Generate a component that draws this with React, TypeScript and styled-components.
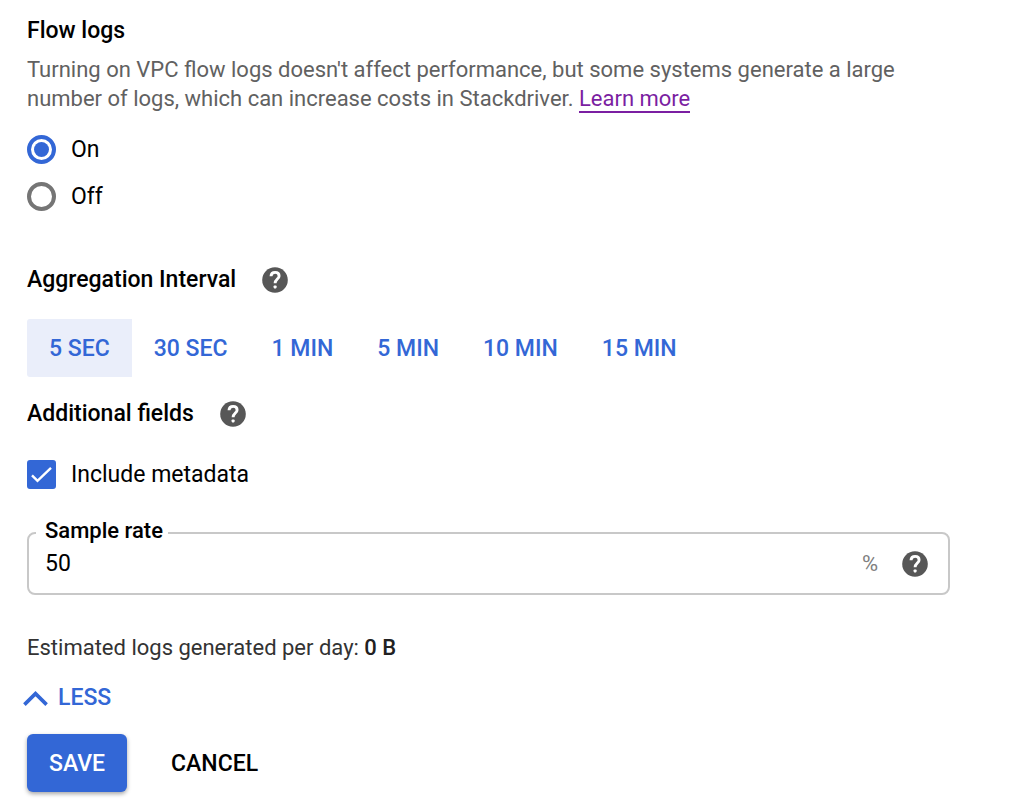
import React, { useState } from 'react';
import styled, { createGlobalStyle, css } from 'styled-components';

const BLUE = '#3367d6';

const GlobalStyle = createGlobalStyle`
  *, *::before, *::after { box-sizing: border-box; }
  body {
    margin: 0;
    background: #fff;
    color: #000;
    font-family: Roboto, "Liberation Sans", sans-serif;
    font-size: 23px;
    line-height: 29px;
  }
  button, input { font: inherit; color: inherit; }
`;

const Form = styled.form`
  display: flex;
  flex-direction: column;
  padding: 16px 74px 18px 27px;
`;

const Heading = styled.h2`
  margin: 0;
  font-size: 23px;
  font-weight: 500;
`;

const HeadingRow = styled.div`
  display: flex;
  align-items: center;
  gap: 26px;
`;

const Description = styled.p`
  margin: 10px 0 22px;
  max-width: 880px;
  font-size: 22px;
  color: #616161;
`;

const Link = styled.a`
  color: #7b1fa2;
  text-decoration: none;
  border-bottom: 2px solid currentColor;
`;

const Options = styled.div`
  display: flex;
  flex-direction: column;
  align-items: flex-start;
  gap: 18px;
  margin-bottom: 54px;
`;

const Choice = styled.label`
  display: flex;
  align-items: center;
  gap: 15px;
`;

const Radio = styled.input.attrs({ type: 'radio' })`
  appearance: none;
  flex: none;
  width: 29px;
  height: 29px;
  margin: 0;
  border: 4px solid #757575;
  border-radius: 50%;

  &:checked {
    border-color: ${BLUE};
    background: ${BLUE};
    background-clip: content-box;
    padding: 3px;
  }
`;

const CheckWrap = styled.span`
  display: grid;
  width: 29px;
  height: 29px;

  > * { grid-area: 1 / 1; }
  > svg { pointer-events: none; }
`;

const Checkbox = styled.input.attrs({ type: 'checkbox' })`
  appearance: none;
  width: 29px;
  height: 29px;
  margin: 0;
  border: 3px solid #757575;
  border-radius: 3px;

  &:checked {
    border-color: ${BLUE};
    background: ${BLUE};
  }
`;

const Help = styled.button`
  display: flex;
  flex: none;
  padding: 0;
  border: 0;
  background: none;
  color: #575757;
`;

const Intervals = styled.div`
  display: flex;
  flex-wrap: wrap;
  margin: 25px 0 22px;
`;

const buttonBase = css`
  height: 58px;
  padding: 0 22px;
  border: 0;
  font-weight: 500;
  white-space: nowrap;
  cursor: pointer;
`;

const Interval = styled.button<{ $active: boolean }>`
  ${buttonBase}
  color: ${BLUE};
  background: ${(p) => (p.$active ? '#eaeefa' : 'transparent')};
  border-radius: 3px 0 0 3px;
`;

const Metadata = styled.div`
  display: flex;
  margin: 32px 0 43px;
`;

const Field = styled.div`
  position: relative;
  display: flex;
  align-items: center;
  height: 63px;
  padding: 0 20px 0 16px;
  border: 2px solid #c8c8c8;
  border-radius: 8px;
`;

const FieldLabel = styled.label`
  position: absolute;
  top: -18px;
  left: 7px;
  padding: 0 5px 0 9px;
  background: #fff;
  font-size: 22px;
  font-weight: 500;
`;

const FieldInput = styled.input`
  flex: 1;
  min-width: 0;
  padding: 0;
  border: 0;
  outline: 0;
  background: none;
`;

const Unit = styled.span`
  margin-right: 24px;
  font-size: 22px;
  color: #808080;
`;

const Estimate = styled.p`
  margin: 38px 0 21px;
  font-size: 22px;
  color: #333;

  strong { font-weight: 500; color: #212121; }
`;

const Toggle = styled.button`
  display: flex;
  align-items: center;
  align-self: flex-start;
  gap: 10px;
  margin-left: -4px;
  padding: 0;
  border: 0;
  background: none;
  color: ${BLUE};
  font-weight: 500;
  cursor: pointer;
`;

const Actions = styled.div`
  display: flex;
  gap: 22px;
  margin-top: 22px;
`;

const Save = styled.button`
  ${buttonBase}
  border-radius: 6px;
  background: ${BLUE};
  color: #fff;
  box-shadow: 0 2px 4px rgba(0, 0, 0, 0.35);
`;

const Cancel = styled.button`
  ${buttonBase}
  background: none;
`;

const HelpButton = ({ topic }: { topic: string }) => (
  <Help type="button" aria-label={`Help for ${topic}`}>
    <svg width="26" height="26" viewBox="0 0 26 26" aria-hidden="true">
      <circle cx="13" cy="13" r="12.8" fill="currentColor" />
      <path
        d="M9 9.3C9.1 6.8 10.7 5.4 13.1 5.4c2.4 0 4 1.4 4 3.5 0 3.1-4 3.3-4 7.4"
        fill="none"
        stroke="#fff"
        strokeWidth="2.9"
      />
      <rect x="11.6" y="18.4" width="3" height="3" rx="0.8" fill="#fff" />
    </svg>
  </Help>
);

const INTERVALS = ['5 SEC', '30 SEC', '1 MIN', '5 MIN', '10 MIN', '15 MIN'];

export default function App() {
  const [flowLogs, setFlowLogs] = useState('On');
  const [interval, setInterval] = useState('5 SEC');

  return (
    <>
      <GlobalStyle />
      <Form onSubmit={(e) => e.preventDefault()}>
        <Heading id="flow-logs">Flow logs</Heading>
        <Description>
          Turning on VPC flow logs doesn't affect performance, but some systems generate a large
          number of logs, which can increase costs in Stackdriver. <Link href="#">Learn more</Link>
        </Description>
        <Options role="radiogroup" aria-labelledby="flow-logs">
          {['On', 'Off'].map((value) => (
            <Choice key={value}>
              <Radio
                name="flow-logs"
                value={value}
                checked={flowLogs === value}
                onChange={() => setFlowLogs(value)}
              />
              {value}
            </Choice>
          ))}
        </Options>

        <HeadingRow>
          <Heading>Aggregation Interval</Heading>
          <HelpButton topic="aggregation interval" />
        </HeadingRow>
        <Intervals>
          {INTERVALS.map((value) => (
            <Interval
              key={value}
              type="button"
              $active={interval === value}
              aria-pressed={interval === value}
              onClick={() => setInterval(value)}
            >
              {value}
            </Interval>
          ))}
        </Intervals>

        <HeadingRow>
          <Heading>Additional fields</Heading>
          <HelpButton topic="additional fields" />
        </HeadingRow>
        <Metadata>
          <Choice>
            <CheckWrap>
              <Checkbox defaultChecked />
              <svg width="29" height="29" viewBox="0 0 29 29" fill="none" stroke="#fff" strokeWidth="2.4" aria-hidden="true">
                <path d="M5 15.3l5.5 5.5L24 7.9" />
              </svg>
            </CheckWrap>
            Include metadata
          </Choice>
        </Metadata>

        <Field>
          <FieldLabel htmlFor="sample-rate">Sample rate</FieldLabel>
          <FieldInput id="sample-rate" type="text" inputMode="numeric" defaultValue="50" />
          <Unit>%</Unit>
          <HelpButton topic="sample rate" />
        </Field>

        <Estimate>
          Estimated logs generated per day: <strong>0 B</strong>
        </Estimate>
        <Toggle type="button" aria-expanded="true">
          <svg width="25" height="16" viewBox="0 0 25 16" fill="none" stroke="currentColor" strokeWidth="3.6" aria-hidden="true">
            <path d="M1.4 14.6L12.5 3.6l11.1 11" />
          </svg>
          LESS
        </Toggle>
        <Actions>
          <Save type="submit">SAVE</Save>
          <Cancel type="button">CANCEL</Cancel>
        </Actions>
      </Form>
    </>
  );
}
